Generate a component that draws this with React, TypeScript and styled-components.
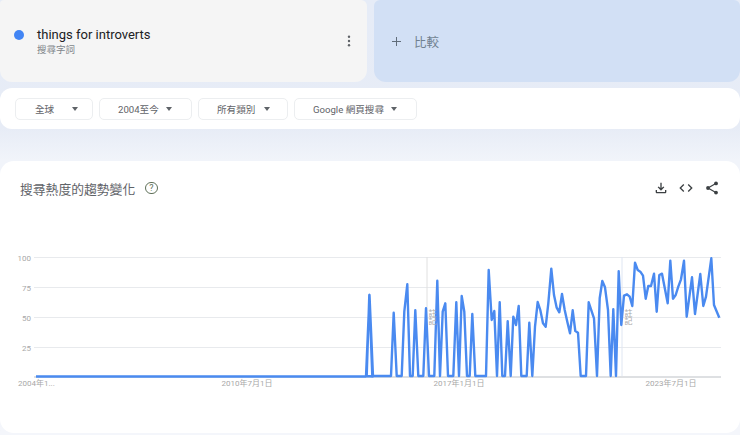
import styled, { createGlobalStyle } from "styled-components";
import { MdCode, MdOutlineFileDownload } from "react-icons/md";

const CHART_W = 740;
const CHART_H = 180;

// [x, y] read off two crops of the chart at x3 scale
const midPoints = [
  [20, 438], [28, 195], [37, 438], [93, 438], [101, 248], [110, 438], [125, 438],
  [133, 245], [142, 163], [150, 438], [158, 438], [166, 241], [175, 438], [190, 438],
  [198, 235], [207, 438], [223, 438], [232, 152], [240, 438], [248, 245], [256, 220],
  [264, 438], [280, 438], [289, 217], [297, 438], [305, 198], [313, 245], [321, 438],
  [329, 438], [337, 252], [346, 438], [378, 438], [386, 120], [395, 270], [403, 243],
  [411, 438], [419, 217], [427, 438], [435, 438], [443, 274], [452, 438], [460, 260],
  [468, 285], [476, 228], [484, 438], [500, 438], [508, 278], [517, 438], [525, 290],
  [533, 216], [541, 240], [549, 280], [557, 290], [565, 220],
];

const endPoints = [
  [4, 116], [12, 195], [20, 233], [28, 247], [36, 192], [44, 240], [52, 275], [60, 310],
  [68, 241], [76, 303], [84, 308], [92, 438], [108, 438], [116, 217], [132, 265],
  [141, 438], [149, 205], [157, 153], [165, 172], [174, 240], [182, 438], [190, 238],
  [198, 438], [206, 124], [214, 285], [222, 197], [231, 193], [239, 200], [247, 228],
  [255, 98], [263, 120], [271, 125], [279, 137], [287, 206], [295, 168], [303, 168],
  [312, 131], [320, 245], [328, 135], [336, 131], [353, 220], [361, 92], [369, 206],
  [377, 195], [385, 170], [393, 148], [402, 92], [410, 260], [426, 142], [435, 252],
  [451, 132], [460, 228], [468, 200], [484, 85], [492, 225], [508, 263],
];

const linePoints = [
  "36,136.5",
  "366,136.5",
  "369.5,55",
  "373,136.5",
  ...midPoints.map(([x, y]) => `${(360 + x / 3).toFixed(1)},${(y / 3 - 10).toFixed(1)}`),
  ...endPoints.map(([x, y]) => `${(550 + x / 3).toFixed(1)},${(y / 3 - 10).toFixed(1)}`),
].join(" ");

const gridLines = [
  { label: "100", y: 17.5 },
  { label: "75", y: 47.5 },
  { label: "50", y: 77.5 },
  { label: "25", y: 107.5 },
];

const dateLabels = [
  { label: "2010年7月1日", x: 247 },
  { label: "2017年1月1日", x: 459 },
  { label: "2023年7月1日", x: 671 },
];

const filters = [
  { label: "全球", width: 78, inset: 20, gap: 18 },
  { label: "2004至今", width: 93, inset: 19, gap: 7 },
  { label: "所有類別", width: 90, inset: 19, gap: 9 },
  { label: "Google 網頁搜尋", width: 123, inset: 19, gap: 7 },
];

const GlobalStyle = createGlobalStyle`
  html, body {
    margin: 0;
    padding: 0;
  }
  body {
    width: 740px;
    height: 435px;
    overflow: hidden;
    background: linear-gradient(180deg, #e6ecf7 0, #e7ecf6 128px, #f1f4fa 160px, #f4f6fb 100%);
    font-family: Roboto, "Noto Sans CJK TC", sans-serif;
  }
`;

const Page = styled.div`
  display: flex;
  flex-direction: column;
  width: 740px;
  height: 435px;
`;

const TermRow = styled.div`
  display: flex;
  gap: 7px;
  height: 82px;
`;

const TermCard = styled.div`
  flex: 0 0 367px;
  display: flex;
  align-items: center;
  box-sizing: border-box;
  padding: 0 11px 0 14px;
  background: #f5f5f5;
  border-radius: 4px 6px 12px 12px;
`;

const Dot = styled.span`
  flex: none;
  width: 10px;
  height: 10px;
  margin: -12px 13px 0 0;
  border-radius: 50%;
  background: #4285f4;
`;

const TermText = styled.div`
  flex: 1;
  margin-top: 1px;
`;

const TermName = styled.div`
  font-size: 13px;
  line-height: 16px;
  color: #202124;
`;

const TermType = styled.div`
  font-size: 9.5px;
  line-height: 14px;
  color: #80868b;
`;

const MoreDots = styled.svg`
  flex: none;
  width: 14px;
  height: 14px;
`;

const CompareCard = styled.div`
  flex: 1;
  display: flex;
  align-items: center;
  gap: 13px;
  padding-left: 18px;
  background: #d2e0f5;
  border-radius: 6px 6px 12px 12px;
  color: #70808f;
  font-size: 12.5px;
`;

const PlusIcon = styled.svg`
  width: 9px;
  height: 9px;
`;

const FilterBar = styled.div`
  display: flex;
  gap: 6px;
  height: 41px;
  box-sizing: border-box;
  margin-top: 6px;
  padding: 10px 15px 0;
  background: #fff;
  border-radius: 12px;
`;

const FilterChip = styled.div<{ $width: number; $inset: number; $gap: number }>`
  display: flex;
  align-items: center;
  gap: ${(p) => p.$gap}px;
  width: ${(p) => p.$width}px;
  height: 22px;
  box-sizing: border-box;
  padding-left: ${(p) => p.$inset - 1}px;
  border: 1px solid #eceef0;
  border-radius: 5px;
  font-size: 9.6px;
  color: #5f6368;
`;

const Caret = styled.span`
  width: 0;
  height: 0;
  border-left: 3px solid transparent;
  border-right: 3px solid transparent;
  border-top: 4px solid #5f6368;
`;

const TrendCard = styled.section`
  flex: 1;
  display: flex;
  flex-direction: column;
  margin: 32px 0 2px;
  background: #fff;
  border-radius: 14px;
`;

const TrendHeader = styled.header`
  display: flex;
  align-items: center;
  height: 54px;
  padding: 0 20px;
`;

const TrendTitle = styled.h2`
  margin: 0;
  font-size: 12.8px;
  font-weight: 400;
  color: #5f6368;
`;

const HelpMark = styled.span`
  display: flex;
  align-items: center;
  justify-content: center;
  box-sizing: border-box;
  width: 12.5px;
  height: 12.5px;
  margin-left: 10px;
  border: 1.3px solid #5f7059;
  border-radius: 50%;
  font-size: 9px;
  color: #5f7059;
`;

const Actions = styled.div`
  display: flex;
  gap: 9.7px;
  margin-left: auto;
  color: #3c4043;
  font-size: 16px;
`;

const ShareIcon = styled.svg`
  width: 16px;
  height: 16px;
`;

const Chart = styled.svg`
  display: block;
  margin-top: 25px;
  font-family: Roboto, "Noto Sans CJK TC", sans-serif;
`;

const AxisText = styled.text`
  font-size: 8px;
  fill: #a8a8a8;
`;

export default function App() {
  return (
    <Page>
      <GlobalStyle />
      <TermRow>
        <TermCard>
          <Dot />
          <TermText>
            <TermName>things for introverts</TermName>
            <TermType>搜尋字詞</TermType>
          </TermText>
          <MoreDots viewBox="0 0 14 14">
            <circle cx="7" cy="2.8" r="1.2" fill="#5f6368" />
            <circle cx="7" cy="7" r="1.2" fill="#5f6368" />
            <circle cx="7" cy="11.2" r="1.2" fill="#5f6368" />
          </MoreDots>
        </TermCard>
        <CompareCard>
          <PlusIcon viewBox="0 0 10 10">
            <path d="M5 0v10M0 5h10" stroke="#5f6b78" strokeWidth="1.1" />
          </PlusIcon>
          比較
        </CompareCard>
      </TermRow>

      <FilterBar>
        {filters.map((f) => (
          <FilterChip key={f.label} $width={f.width} $inset={f.inset} $gap={f.gap}>
            {f.label}
            <Caret />
          </FilterChip>
        ))}
      </FilterBar>

      <TrendCard>
        <TrendHeader>
          <TrendTitle>搜尋熱度的趨勢變化</TrendTitle>
          <HelpMark>?</HelpMark>
          <Actions>
            <MdOutlineFileDownload />
            <MdCode />
            <ShareIcon viewBox="0 0 16 16">
              <path d="M11.8 3.6 4 8l7.8 4.4" fill="none" stroke="currentColor" strokeWidth="1.2" />
              <circle cx="12" cy="3.4" r="1.9" fill="currentColor" />
              <circle cx="4" cy="8" r="1.9" fill="currentColor" />
              <circle cx="12" cy="12.6" r="1.9" fill="currentColor" />
            </ShareIcon>
          </Actions>
        </TrendHeader>
        <Chart width={CHART_W} height={CHART_H} viewBox={`0 0 ${CHART_W} ${CHART_H}`}>
          {gridLines.map((g) => (
            <g key={g.label}>
              <line x1="34" x2="721" y1={g.y} y2={g.y} stroke="#e8eaed" strokeWidth="1" />
              <AxisText x="31" y={g.y + 3} textAnchor="end">
                {g.label}
              </AxisText>
            </g>
          ))}
          <line x1="427" x2="427" y1="17" y2="136" stroke="#e0e0e0" />
          <line x1="622" x2="622" y1="17" y2="136" stroke="#dfe6f2" />
          <line x1="34" x2="721" y1="137" y2="137" stroke="#bdc1c6" />
          <AxisText x="18" y="146">
            2004年1...
          </AxisText>
          {dateLabels.map((d) => (
            <AxisText key={d.label} x={d.x} y="146" textAnchor="middle">
              {d.label}
            </AxisText>
          ))}
          <polyline
            points={linePoints}
            fill="none"
            stroke="#4a8af0"
            strokeWidth="2.4"
            strokeLinejoin="round"
          />
          <AxisText x="431.5" y="77" textAnchor="middle" writingMode="vertical-rl">
            註記
          </AxisText>
          <AxisText x="627.5" y="77" textAnchor="middle" writingMode="vertical-rl">
            註記
          </AxisText>
        </Chart>
      </TrendCard>
    </Page>
  );
}
